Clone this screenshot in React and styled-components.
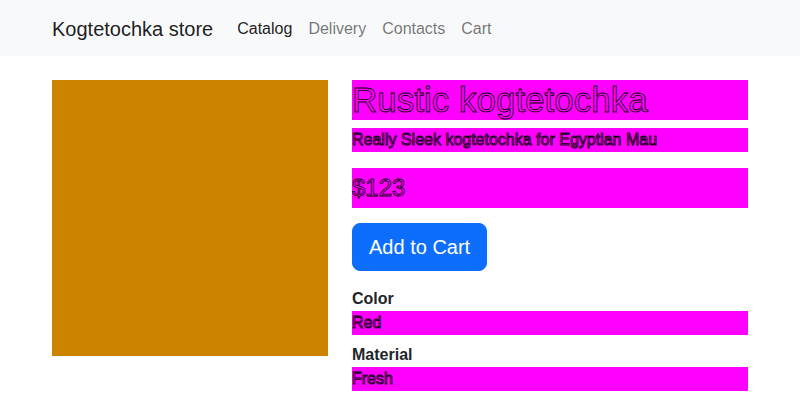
import React from 'react';
import styled, { createGlobalStyle } from 'styled-components';

const GlobalStyle = createGlobalStyle`
  body {
    margin: 0;
    background: #fff;
    font-family: "Segoe UI", "Liberation Sans", Arial, sans-serif;
    font-size: 16px;
    line-height: 1.5;
    color: #212529;
  }
`;

const Navbar = styled.nav`
  background: #f8f9fa;
  padding: 8px 0;
`;

const Container = styled.div`
  max-width: 696px;
  margin: 0 auto;
  padding: 0 12px;
  display: flex;
  align-items: center;
`;

const Brand = styled.a`
  font-size: 20px;
  line-height: 30px;
  padding: 6px 0 4px;
  margin-right: 16px;
  color: rgba(0, 0, 0, 0.9);
  text-decoration: none;
`;

const NavList = styled.div`
  display: flex;
`;

const NavLink = styled.a`
  padding: 9px 8px 7px;
  line-height: 24px;
  color: ${(p) => (p.active ? 'rgba(0, 0, 0, 0.9)' : 'rgba(0, 0, 0, 0.55)')};
  text-decoration: none;
`;

const Main = styled.main`
  max-width: 696px;
  margin: 24px auto 0;
  padding: 0 12px;
  display: grid;
  grid-template-columns: 276px 396px;
  column-gap: 24px;
`;

const Picture = styled.div`
  width: 276px;
  height: 276px;
  background: #cc8400;
`;

const Details = styled.div`
  display: flex;
  flex-direction: column;
  align-items: flex-start;
`;

const Marked = styled.div`
  align-self: stretch;
  background: #ff00ff;
  color: #ff00ff;
  -webkit-text-stroke: 0.8px #000;
  font-size: ${(p) => p.size || 16}px;
  line-height: ${(p) => p.lh || 24}px;
  font-weight: ${(p) => p.weight || 400};
  margin-bottom: ${(p) => p.mb || 0}px;
  white-space: nowrap;
`;

const CartButton = styled.button`
  margin-top: 15px;
  background: #0d6efd;
  border: 1px solid #0d6efd;
  border-radius: 8px;
  color: #fff;
  font-family: inherit;
  font-size: 20px;
  line-height: 30px;
  padding: 8px 16px;
  cursor: pointer;
`;

const Label = styled.div`
  font-weight: 700;
  margin-top: ${(p) => p.mt}px;
  line-height: 24px;
`;

export default function App() {
  return (
    <>
      <GlobalStyle />
      <Navbar>
        <Container>
          <Brand href="#">Kogtetochka store</Brand>
          <NavList>
            <NavLink href="#" active>Catalog</NavLink>
            <NavLink href="#">Delivery</NavLink>
            <NavLink href="#">Contacts</NavLink>
            <NavLink href="#">Cart</NavLink>
          </NavList>
        </Container>
      </Navbar>
      <Main>
        <Picture />
        <Details>
          <Marked size={35} lh={40} weight={500} mb={8}>Rustic kogtetochka</Marked>
          <Marked mb={16}>Really Sleek kogtetochka for Egyptian Mau</Marked>
          <Marked size={24} lh={40} weight={500}>$123</Marked>
          <CartButton>Add to Cart</CartButton>
          <Label mt={16}>Color</Label>
          <Marked>Red</Marked>
          <Label mt={8}>Material</Label>
          <Marked>Fresh</Marked>
        </Details>
      </Main>
    </>
  );
}
